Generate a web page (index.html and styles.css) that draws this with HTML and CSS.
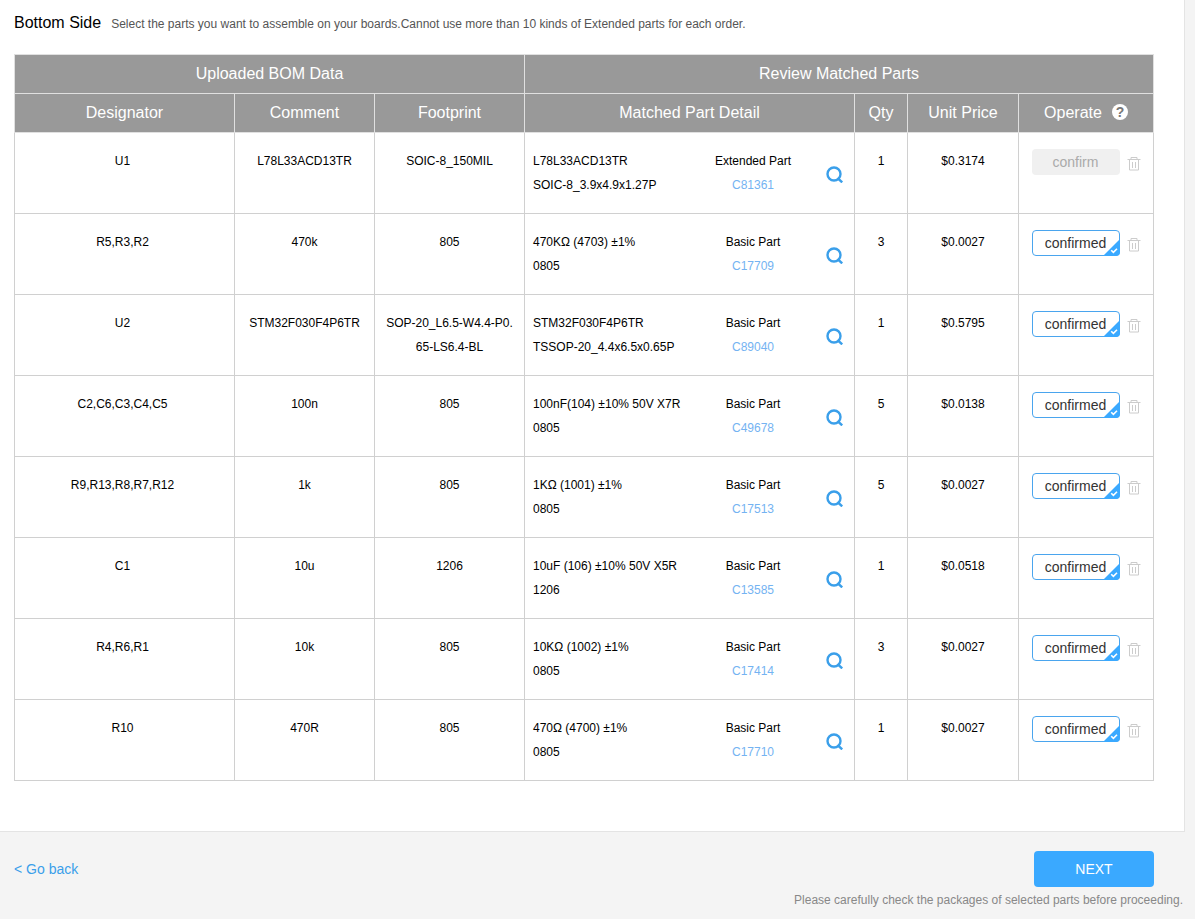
FILE: index.html
```html
<!DOCTYPE html>
<html lang="en">
<head>
<meta charset="utf-8">
<title>Bottom Side</title>
<link rel="stylesheet" href="styles.css">
</head>
<body>
<svg class="sprite" aria-hidden="true">
  <symbol id="search" viewBox="0 0 17 17"><circle cx="8" cy="8" r="6.5" fill="none" stroke="currentColor" stroke-width="2.4"/><path d="M11.5 12 L16.2 16.4" stroke="currentColor" stroke-width="2.4" fill="none"/></symbol>
  <symbol id="trash" viewBox="0 0 14 15"><path d="M0.5 3.5H13.5M4 3V1.5H10V3M2.5 3.5V14H11.5V3.5M5.5 6V12M8.5 6V12" fill="none" stroke="currentColor"/></symbol>
  <symbol id="tick" viewBox="0 0 17 17"><path d="M17 0V13Q17 17 13 17H0Z" fill="#3aa9ff"/><path d="M8.2 11.2L10.4 13.4L14 9.8" fill="none" stroke="#fff" stroke-width="1.6"/></symbol>
</svg>
<main class="panel">
  <header class="heading">
    <h1 class="title">Bottom Side</h1>
    <p class="hint">Select the parts you want to assemble on your boards.Cannot use more than 10 kinds of Extended parts for each order.</p>
  </header>
  <table class="bom">
    <colgroup>
      <col class="col-designator"><col class="col-comment"><col class="col-footprint"><col class="col-detail"><col class="col-qty"><col class="col-price"><col class="col-operate">
    </colgroup>
    <thead>
      <tr><th colspan="3">Uploaded BOM Data</th><th colspan="4">Review Matched Parts</th></tr>
      <tr>
        <th>Designator</th><th>Comment</th><th>Footprint</th><th>Matched Part Detail</th><th>Qty</th><th>Unit Price</th>
        <th><div class="operate-head">Operate <button class="help" type="button" aria-label="Help">?</button></div></th>
      </tr>
    </thead>
    <tbody>
      <tr>
        <td class="designator">U1</td><td>L78L33ACD13TR</td><td>SOIC-8_150MIL</td>
        <td><div class="detail"><div class="part">L78L33ACD13TR<br>SOIC-8_3.9x4.9x1.27P</div><div class="kind">Extended Part<br><a href="#">C81361</a></div><button class="icon search" type="button" aria-label="Search"><svg><use href="#search"/></svg></button></div></td>
        <td>1</td><td>$0.3174</td>
        <td><div class="operate"><button class="confirm" type="button" disabled>confirm</button><button class="icon trash" type="button" aria-label="Delete"><svg><use href="#trash"/></svg></button></div></td>
      </tr>
      <tr>
        <td class="designator">R5,R3,R2</td><td>470k</td><td>805</td>
        <td><div class="detail"><div class="part">470KΩ (4703) ±1%<br>0805</div><div class="kind">Basic Part<br><a href="#">C17709</a></div><button class="icon search" type="button" aria-label="Search"><svg><use href="#search"/></svg></button></div></td>
        <td>3</td><td>$0.0027</td>
        <td><div class="operate"><button class="confirm confirmed" type="button">confirmed<svg class="tick"><use href="#tick"/></svg></button><button class="icon trash" type="button" aria-label="Delete"><svg><use href="#trash"/></svg></button></div></td>
      </tr>
      <tr>
        <td class="designator">U2</td><td>STM32F030F4P6TR</td><td>SOP-20_L6.5-W4.4-P0.65-LS6.4-BL</td>
        <td><div class="detail"><div class="part">STM32F030F4P6TR<br>TSSOP-20_4.4x6.5x0.65P</div><div class="kind">Basic Part<br><a href="#">C89040</a></div><button class="icon search" type="button" aria-label="Search"><svg><use href="#search"/></svg></button></div></td>
        <td>1</td><td>$0.5795</td>
        <td><div class="operate"><button class="confirm confirmed" type="button">confirmed<svg class="tick"><use href="#tick"/></svg></button><button class="icon trash" type="button" aria-label="Delete"><svg><use href="#trash"/></svg></button></div></td>
      </tr>
      <tr>
        <td class="designator">C2,C6,C3,C4,C5</td><td>100n</td><td>805</td>
        <td><div class="detail"><div class="part">100nF(104) ±10% 50V X7R<br>0805</div><div class="kind">Basic Part<br><a href="#">C49678</a></div><button class="icon search" type="button" aria-label="Search"><svg><use href="#search"/></svg></button></div></td>
        <td>5</td><td>$0.0138</td>
        <td><div class="operate"><button class="confirm confirmed" type="button">confirmed<svg class="tick"><use href="#tick"/></svg></button><button class="icon trash" type="button" aria-label="Delete"><svg><use href="#trash"/></svg></button></div></td>
      </tr>
      <tr>
        <td class="designator">R9,R13,R8,R7,R12</td><td>1k</td><td>805</td>
        <td><div class="detail"><div class="part">1KΩ (1001) ±1%<br>0805</div><div class="kind">Basic Part<br><a href="#">C17513</a></div><button class="icon search" type="button" aria-label="Search"><svg><use href="#search"/></svg></button></div></td>
        <td>5</td><td>$0.0027</td>
        <td><div class="operate"><button class="confirm confirmed" type="button">confirmed<svg class="tick"><use href="#tick"/></svg></button><button class="icon trash" type="button" aria-label="Delete"><svg><use href="#trash"/></svg></button></div></td>
      </tr>
      <tr>
        <td class="designator">C1</td><td>10u</td><td>1206</td>
        <td><div class="detail"><div class="part">10uF (106) ±10% 50V X5R<br>1206</div><div class="kind">Basic Part<br><a href="#">C13585</a></div><button class="icon search" type="button" aria-label="Search"><svg><use href="#search"/></svg></button></div></td>
        <td>1</td><td>$0.0518</td>
        <td><div class="operate"><button class="confirm confirmed" type="button">confirmed<svg class="tick"><use href="#tick"/></svg></button><button class="icon trash" type="button" aria-label="Delete"><svg><use href="#trash"/></svg></button></div></td>
      </tr>
      <tr>
        <td class="designator">R4,R6,R1</td><td>10k</td><td>805</td>
        <td><div class="detail"><div class="part">10KΩ (1002) ±1%<br>0805</div><div class="kind">Basic Part<br><a href="#">C17414</a></div><button class="icon search" type="button" aria-label="Search"><svg><use href="#search"/></svg></button></div></td>
        <td>3</td><td>$0.0027</td>
        <td><div class="operate"><button class="confirm confirmed" type="button">confirmed<svg class="tick"><use href="#tick"/></svg></button><button class="icon trash" type="button" aria-label="Delete"><svg><use href="#trash"/></svg></button></div></td>
      </tr>
      <tr>
        <td class="designator">R10</td><td>470R</td><td>805</td>
        <td><div class="detail"><div class="part">470Ω (4700) ±1%<br>0805</div><div class="kind">Basic Part<br><a href="#">C17710</a></div><button class="icon search" type="button" aria-label="Search"><svg><use href="#search"/></svg></button></div></td>
        <td>1</td><td>$0.0027</td>
        <td><div class="operate"><button class="confirm confirmed" type="button">confirmed<svg class="tick"><use href="#tick"/></svg></button><button class="icon trash" type="button" aria-label="Delete"><svg><use href="#trash"/></svg></button></div></td>
      </tr>
    </tbody>
  </table>
</main>
<footer class="footer">
  <div class="actions">
    <a class="back" href="#">&lt; Go back</a>
    <button class="next" type="button">NEXT</button>
  </div>
  <p class="note">Please carefully check the packages of selected parts before proceeding.</p>
</footer>
</body>
</html>
```
FILE: styles.css
```css
* { box-sizing: border-box; }
body {
  margin: 0;
  background: #f4f4f4;
  color: #000;
  font-family: "Liberation Sans", Arial, sans-serif;
  font-size: 12px;
}
button { font-family: inherit; cursor: pointer; }
a { text-decoration: none; }
.sprite { display: none; }

.panel {
  margin-right: 10px;
  padding: 11px 30px 50px 14px;
  background: #fff;
  border-right: 1px solid #e4e4e4;
  border-bottom: 1px solid #e4e4e4;
}
.heading {
  display: flex;
  align-items: center;
  gap: 10px;
  margin-bottom: 19px;
}
.title { margin: 0; font-size: 16px; font-weight: normal; line-height: 24px; }
.hint { margin: 0; padding-top: 2px; color: #555; line-height: 22px; }

.bom {
  width: 100%;
  table-layout: fixed;
  border-collapse: collapse;
}
.col-designator { width: 220px; }
.col-comment { width: 140px; }
.col-footprint { width: 150px; }
.col-detail { width: 330px; }
.col-qty { width: 53px; }
.col-price { width: 111px; }
.col-operate { width: 135px; }

th {
  height: 39px;
  padding: 0;
  background: #999;
  border: 1px solid #e0e0e0;
  color: #fff;
  font-size: 16px;
  font-weight: normal;
  line-height: 20px;
}
td {
  padding: 16px 10px;
  border: 1px solid #d0d0d0;
  text-align: center;
  vertical-align: top;
  line-height: 24px;
  word-break: break-all;
}
td.designator { padding-right: 14px; }
td:has(.detail), td:has(.operate) { padding-left: 0; padding-right: 0; }

.operate-head { display: flex; align-items: center; justify-content: center; gap: 10px; }
.help {
  width: 16px;
  height: 16px;
  margin-bottom: 2px;
  padding: 0;
  border: 0;
  border-radius: 50%;
  background: #fff;
  color: #777;
  font-size: 14px;
  font-weight: bold;
  line-height: 16px;
}

.detail { display: flex; padding: 0 11px 0 8px; }
.part { flex: 1; text-align: left; white-space: nowrap; }
.kind { width: 100px; margin-right: 23px; }
.kind a { color: #74b3f2; }
.icon { padding: 0; border: 0; background: none; }
.icon svg { display: block; width: 100%; height: 100%; }
.search { width: 17px; height: 17px; margin-top: 17px; color: #3a9fea; }
.trash { width: 14px; height: 15px; margin-top: 7px; color: #ccc; }

.operate { display: flex; align-items: flex-start; justify-content: center; gap: 7px; }
.confirm {
  position: relative;
  width: 88px;
  height: 26px;
  padding: 0;
  border: 0;
  border-radius: 4px;
  background: #f0f0f0;
  color: #aaa;
  font-size: 14px;
  line-height: 24px;
}
.confirmed { border: 1px solid #4aa5ee; background: #fff; color: #333; }
.tick { position: absolute; right: -1px; bottom: -1px; width: 17px; height: 17px; }

.footer { padding: 19px 12px 8px 14px; }
.actions { display: flex; align-items: center; justify-content: space-between; padding-right: 29px; }
.back { color: #3a9fea; font-size: 14px; }
.next {
  width: 120px;
  height: 36px;
  padding: 0;
  border: 0;
  border-radius: 4px;
  background: #3aa9ff;
  color: #fff;
  font-size: 14px;
}
.note { margin: 4px 0 0; color: #888; line-height: 18px; text-align: right; }
```
